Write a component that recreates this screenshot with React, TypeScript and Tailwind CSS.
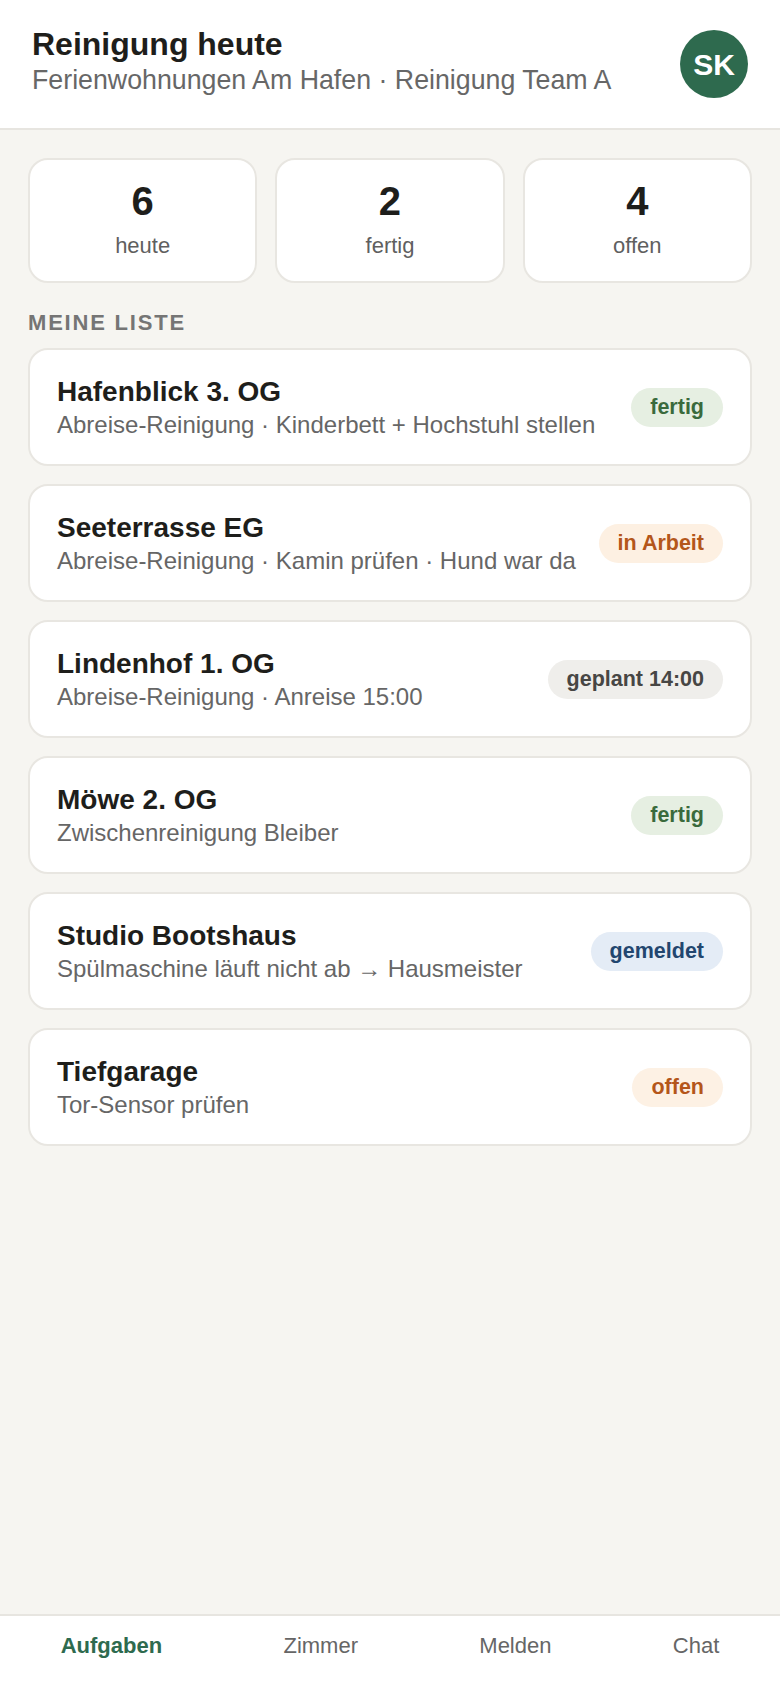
const stats = [
  { value: "6", label: "heute" },
  { value: "2", label: "fertig" },
  { value: "4", label: "offen" },
];

const badgeStyles = {
  fertig: "bg-[#e6efe2] text-[#3a6a3c]",
  arbeit: "bg-[#fdf0e2] text-[#b4561a]",
  geplant: "bg-[#efeeeb] text-[#474644]",
  gemeldet: "bg-[#e4ecf6] text-[#22466f]",
  offen: "bg-[#fdf1e4] text-[#b4561a]",
};

const tasks = [
  {
    title: "Hafenblick 3. OG",
    note: "Abreise-Reinigung · Kinderbett + Hochstuhl stellen",
    status: "fertig",
    kind: "fertig" as const,
  },
  {
    title: "Seeterrasse EG",
    note: "Abreise-Reinigung · Kamin prüfen · Hund war da",
    status: "in Arbeit",
    kind: "arbeit" as const,
  },
  {
    title: "Lindenhof 1. OG",
    note: "Abreise-Reinigung · Anreise 15:00",
    status: "geplant 14:00",
    kind: "geplant" as const,
  },
  {
    title: "Möwe 2. OG",
    note: "Zwischenreinigung Bleiber",
    status: "fertig",
    kind: "fertig" as const,
  },
  {
    title: "Studio Bootshaus",
    note: "Spülmaschine läuft nicht ab → Hausmeister",
    status: "gemeldet",
    kind: "gemeldet" as const,
  },
  {
    title: "Tiefgarage",
    note: "Tor-Sensor prüfen",
    status: "offen",
    kind: "offen" as const,
  },
];

const tabs = ["Aufgaben", "Zimmer", "Melden", "Chat"];

export default function App() {
  return (
    <div className="min-h-screen flex flex-col bg-[#f6f5f1] font-['Liberation_Sans',Arial,sans-serif] text-[#1e1e1b]">
      <header className="bg-white border-b-2 border-[#e7e5e0] pl-[32px] pr-[32px] pt-[25px] pb-[30px] flex items-center justify-between">
        <div>
          <h1 className="text-[32px] leading-[38px] font-bold">Reinigung heute</h1>
          <p className="text-[26.75px] leading-[35px] text-[#676767]">
            Ferienwohnungen Am Hafen · Reinigung Team A
          </p>
        </div>
        <div className="mt-[5px] w-[68px] h-[68px] rounded-full bg-[#2e6a4e] text-white text-[30px] font-bold flex items-center justify-center">
          SK
        </div>
      </header>

      <main className="flex-1 px-[28px] pt-[28px]">
        <div className="grid grid-cols-3 gap-[18px]">
          {stats.map((s) => (
            <div
              key={s.label}
              className="bg-white border-2 border-[#e8e6e1] rounded-[20px] pt-[19px] pb-[21px] flex flex-col items-center"
            >
              <span className="text-[40px] leading-[44px] font-bold">{s.value}</span>
              <span className="mt-[9px] text-[22px] leading-[28px] text-[#5f5f5f]">{s.label}</span>
            </div>
          ))}
        </div>

        <h2 className="mt-[27px] mb-[12px] text-[22px] leading-[26px] font-bold tracking-[1.8px] text-[#757575]">
          MEINE LISTE
        </h2>

        <div className="flex flex-col gap-[18px]">
          {tasks.map((t) => (
            <div
              key={t.title}
              className="bg-white border-2 border-[#e8e6e1] rounded-[20px] px-[27px] py-[23.5px] flex items-center justify-between"
            >
              <div>
                <div className="text-[28px] leading-[35px] font-bold">{t.title}</div>
                <div className="text-[24px] leading-[32px] text-[#666666]">{t.note}</div>
              </div>
              <span
                className={`h-[39px] px-[19px] rounded-full flex items-center text-[21.5px] font-bold whitespace-nowrap ${badgeStyles[t.kind]}`}
              >
                {t.status}
              </span>
            </div>
          ))}
        </div>
      </main>

      <nav className="bg-white border-t-2 border-[#e7e5e0] pt-[17px] pb-[29px] flex justify-around">
        {tabs.map((tab, i) => (
          <span
            key={tab}
            className={
              i === 0
                ? "text-[22px] leading-[26px] font-bold text-[#2e6a4e]"
                : "text-[22px] leading-[26px] text-[#666666]"
            }
          >
            {tab}
          </span>
        ))}
      </nav>
    </div>
  );
}
